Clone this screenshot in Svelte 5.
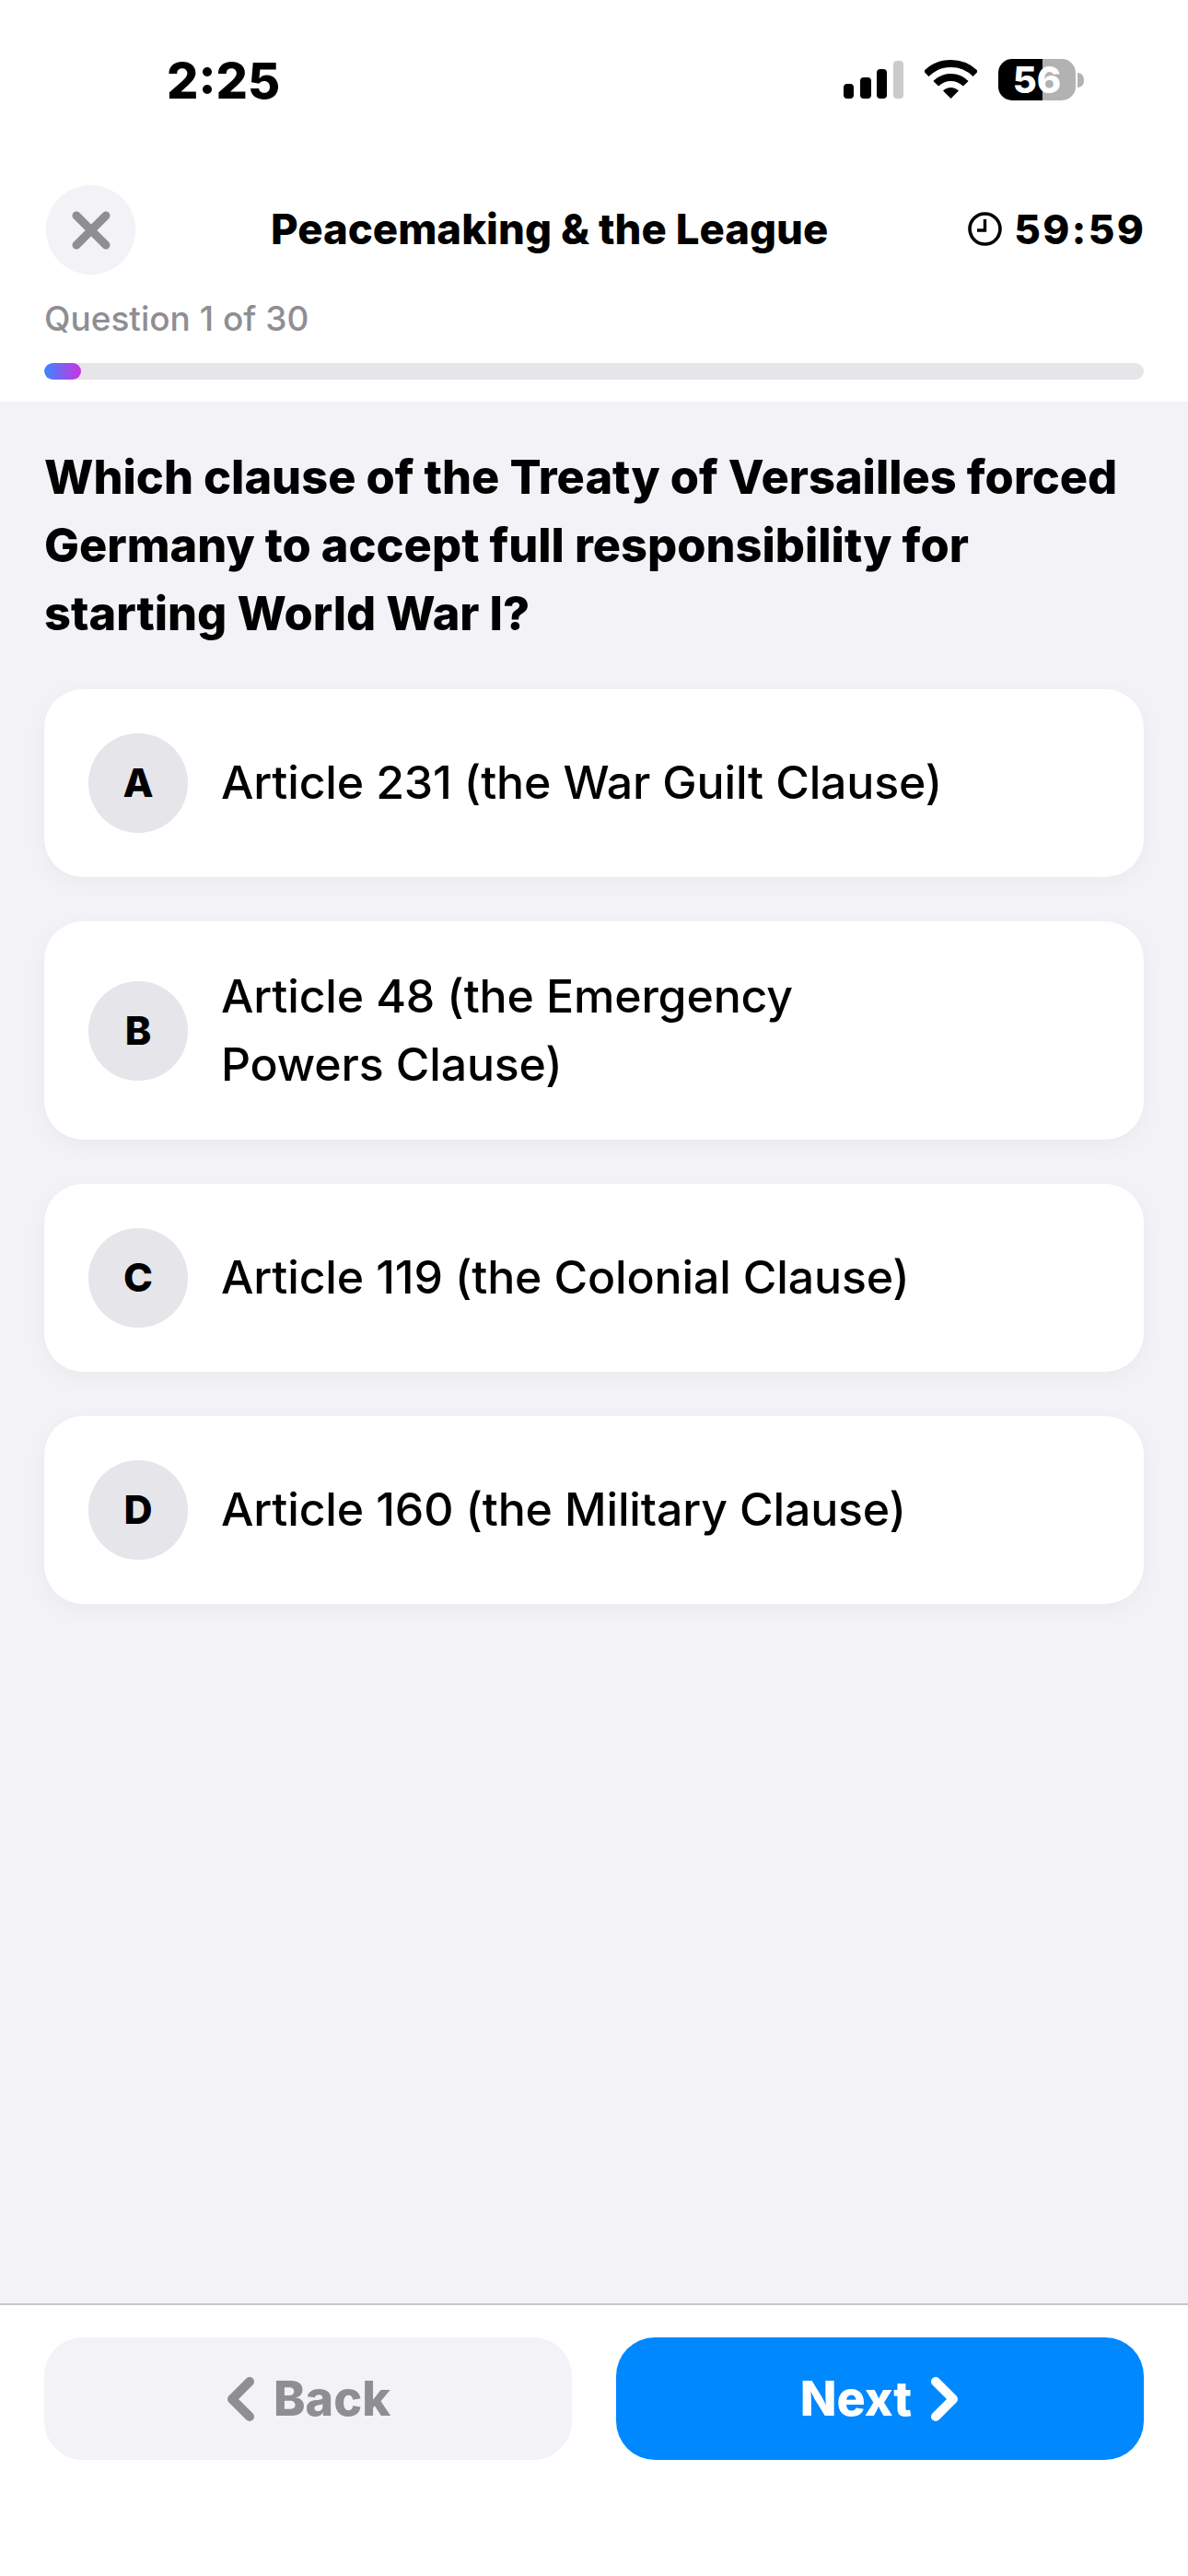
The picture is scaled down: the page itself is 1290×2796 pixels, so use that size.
<script>
	const options = [
		{ key: 'A', lines: ['Article 231 (the War Guilt Clause)'] },
		{ key: 'B', lines: ['Article 48 (the Emergency', 'Powers Clause)'] },
		{ key: 'C', lines: ['Article 119 (the Colonial Clause)'] },
		{ key: 'D', lines: ['Article 160 (the Military Clause)'] }
	];
</script>

<div class="screen">
	<div class="status-bar">
		<span class="time">2:25</span>
		<div class="status-icons">
			<svg class="signal" width="65" height="41" viewBox="0 0 65 41">
				<rect x="0" y="25" width="11" height="16" rx="4" />
				<rect x="18" y="18" width="12" height="23" rx="4" />
				<rect x="36" y="9" width="11" height="32" rx="4" />
				<rect x="54" y="0" width="11" height="41" rx="4" fill="#cbcbcb" />
			</svg>
			<svg class="wifi" width="57" height="42" viewBox="0 0 57 42">
				<path d="M1.63 15.13A38 38 0 0 1 55.37 15.13" fill="none" stroke="#000" stroke-width="8" />
				<path d="M12.24 25.74A23 23 0 0 1 44.76 25.74" fill="none" stroke="#000" stroke-width="8" />
				<path d="M28.5 42L20 33.5A12 12 0 0 1 37 33.5Z" />
			</svg>
			<div class="battery-wrap">
				<div class="battery">56</div>
				<span class="battery-nub"></span>
			</div>
		</div>
	</div>

	<header class="quiz-header">
		<div class="top-row">
			<button class="close-btn" aria-label="Close">
				<svg width="42" height="42" viewBox="0 0 42 42">
					<path d="M5 5L37 37M37 5L5 37" stroke="#8e8e93" stroke-width="9" stroke-linecap="round" />
				</svg>
			</button>
			<span class="title">Peacemaking &amp; the League</span>
			<div class="timer">
				<svg width="37" height="37" viewBox="0 0 37 37">
					<circle cx="18.5" cy="18.5" r="16.5" fill="none" stroke="#000" stroke-width="3.6" />
					<path d="M18.5 8V20H10" fill="none" stroke="#000" stroke-width="3.4" />
				</svg>
				<span class="clock-text">59:59</span>
			</div>
		</div>
		<div class="counter">Question 1 of 30</div>
		<div class="track"><div class="fill" style="width: 40px"></div></div>
	</header>

	<main class="content">
		<h1 class="question">Which clause of the Treaty of Versailles forced<br />Germany to accept full responsibility for<br />starting World War I?</h1>
		<div class="options">
			{#each options as opt}
				<div class="option">
					<span class="letter">{opt.key}</span>
					<span class="option-text">
						{#each opt.lines as line}
							<span class="option-line">{line}</span>
						{/each}
					</span>
				</div>
			{/each}
		</div>
	</main>

	<footer class="footer">
		<button class="nav back">
			<svg width="32" height="48" viewBox="0 0 32 48">
				<path d="M26 5L7 24L26 43" fill="none" stroke="#8e8e93" stroke-width="10" stroke-linecap="round" stroke-linejoin="round" />
			</svg>
			Back
		</button>
		<button class="nav next">
			Next
			<svg width="32" height="48" viewBox="0 0 32 48">
				<path d="M6 5L25 24L6 43" fill="none" stroke="#fff" stroke-width="10" stroke-linecap="round" stroke-linejoin="round" />
			</svg>
		</button>
	</footer>
</div>

<style>
	:global(body) {
		margin: 0;
		background: #fff;
	}

	.screen {
		width: 1290px;
		height: 2796px;
		display: flex;
		flex-direction: column;
		font-family: Inter, "Liberation Sans", sans-serif;
		color: #000;
		overflow: hidden;
	}

	.status-bar {
		height: 201px;
		flex-shrink: 0;
		display: flex;
		justify-content: space-between;
		align-items: flex-start;
		padding: 64px 113px 0 181px;
		box-sizing: border-box;
	}

	.time {
		font-size: 54px;
		line-height: 48px;
		font-weight: 800;
	}

	.status-icons {
		display: flex;
		align-items: flex-end;
		gap: 23px;
	}

	.signal,
	.wifi {
		display: block;
		margin-bottom: 2px;
	}

	.battery-wrap {
		display: flex;
		align-items: center;
		gap: 2px;
	}

	.battery {
		width: 84px;
		height: 45px;
		border-radius: 15px;
		background: linear-gradient(90deg, #000 57%, #b2b2b2 57%);
		color: #fff;
		font-size: 40px;
		font-weight: 800;
		line-height: 45px;
		text-align: center;
	}

	.battery-nub {
		width: 7px;
		height: 16px;
		border-radius: 0 8px 8px 0;
		background: #b2b2b2;
	}

	.quiz-header {
		background: #fff;
		padding: 0 48px 24px;
		flex-shrink: 0;
	}

	.top-row {
		display: flex;
		align-items: center;
		justify-content: space-between;
		height: 97px;
	}

	.close-btn {
		width: 97px;
		height: 97px;
		margin-left: 2px;
		padding: 0;
		border: none;
		border-radius: 50%;
		background: #f2f2f7;
		display: flex;
		align-items: center;
		justify-content: center;
	}

	.title {
		font-size: 45.5px;
		font-weight: 800;
		margin-right: 5px;
		margin-top: -2px;
	}

	.timer {
		display: flex;
		align-items: center;
		gap: 13px;
		font-size: 44px;
		font-weight: 800;
		margin-top: -2px;
	}

	.timer svg {
		display: block;
	}

	.clock-text {
		letter-spacing: 2.4px;
		margin-right: -2.4px;
	}

	.counter {
		font-size: 37px;
		line-height: 44px;
		font-weight: 500;
		color: #8e8e93;
		margin-top: 26px;
	}

	.track {
		height: 18px;
		margin-top: 26px;
		border-radius: 9px;
		background: #e5e5ea;
		overflow: hidden;
	}

	.fill {
		height: 100%;
		border-radius: 9px;
		background: linear-gradient(90deg, #3a86ff, #cc33e0);
	}

	.content {
		flex: 1;
		background: #f2f2f7;
		padding: 45px 48px 0;
	}

	.question {
		margin: 0;
		font-size: 50.5px;
		line-height: 74px;
		font-weight: 800;
	}

	.options {
		display: flex;
		flex-direction: column;
		gap: 48px;
		margin-top: 45px;
	}

	.option {
		display: flex;
		align-items: center;
		gap: 36px;
		padding: 48px;
		background: #fff;
		border-radius: 42px;
		box-shadow: 0 6px 24px rgba(0, 0, 0, 0.04);
	}

	.option:nth-child(2) {
		padding-top: 44px;
		padding-bottom: 43px;
	}

	.letter {
		width: 108px;
		height: 108px;
		flex-shrink: 0;
		border-radius: 50%;
		background: #e5e5ea;
		display: flex;
		align-items: center;
		justify-content: center;
		font-size: 43px;
		font-weight: 800;
		padding-bottom: 2px;
		box-sizing: border-box;
	}

	.option-text {
		display: flex;
		flex-direction: column;
		font-size: 50px;
		line-height: 74px;
		font-weight: 500;
		letter-spacing: -0.15px;
		padding-bottom: 2px;
	}

	.footer {
		height: 296px;
		flex-shrink: 0;
		box-sizing: border-box;
		border-top: 2px solid #c6c6c8;
		padding: 35px 48px 0;
		display: flex;
		gap: 48px;
		background: #fff;
	}

	.nav {
		flex: 1;
		height: 133px;
		border: none;
		border-radius: 42px;
		display: flex;
		align-items: center;
		justify-content: center;
		gap: 20px;
		padding: 0;
		font-family: inherit;
		font-size: 52px;
		font-weight: 800;
	}

	.back {
		background: #f2f2f7;
		color: #8e8e93;
	}

	.next {
		background: #0088ff;
		color: #fff;
	}
</style>
